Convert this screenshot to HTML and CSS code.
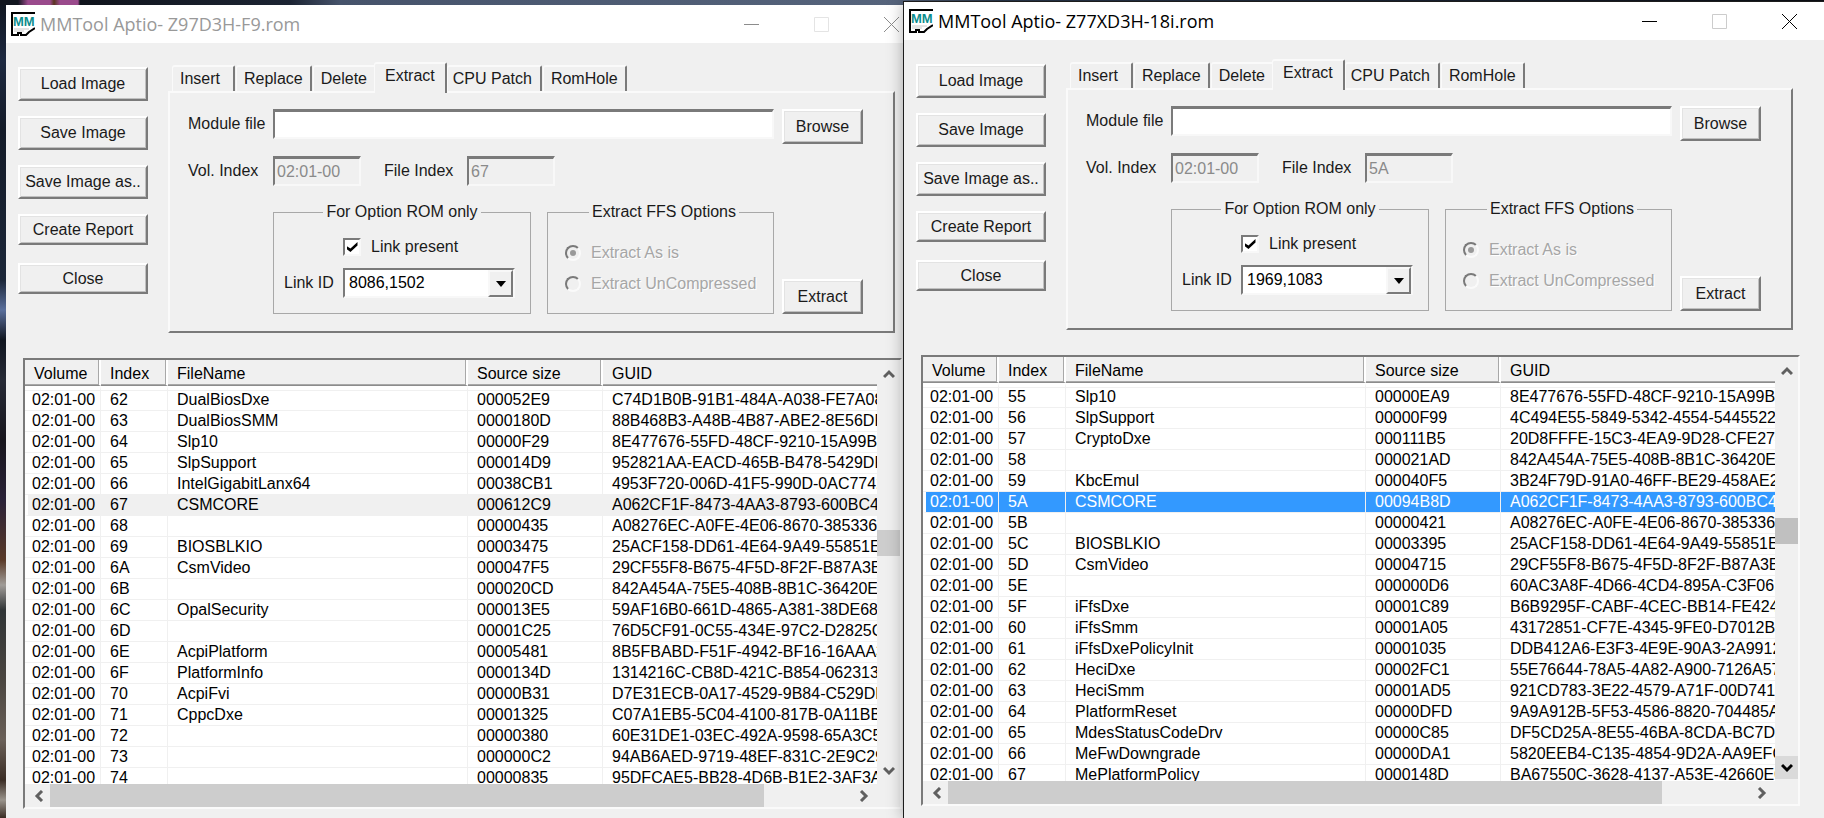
FILE: index.html
```html
<!DOCTYPE html>
<html lang="en">
<head>
<meta charset="utf-8">
<title>MMTool Aptio</title>
<link rel="stylesheet" href="styles.css">
</head>
<body>
<div class="desktop">

<section class="window window-back" aria-label="MMTool Aptio- Z97D3H-F9.rom">
  <header class="titlebar">
    <svg class="app-icon" viewBox="0 0 24 24" aria-hidden="true"><path d="M1 1H24V15L18 19L15 23L10 21L7 23H1Z" fill="#fff"/><path d="M24 1H1V23H7V21H10V23H15L18 20L24 16" fill="none" stroke="#000" stroke-width="2"/><path d="M3 17H18M3 19H13" stroke="#c8c8c8"/><text class="icon-text" x="2" y="14">MM</text></svg>
    <h1 class="title">MMTool Aptio- Z97D3H-F9.rom</h1>
    <div class="controls">
      <button class="ctl" aria-label="Minimize"><svg viewBox="0 0 15 15"><path d="M0 7.5H15"/></svg></button>
      <button class="ctl ctl-max" aria-label="Maximize" disabled><svg viewBox="0 0 15 15"><path d="M.5 .5H14.5V14.5H.5Z"/></svg></button>
      <button class="ctl" aria-label="Close window"><svg viewBox="0 0 15 15"><path d="M0 0L15 15M15 0L0 15"/></svg></button>
    </div>
  </header>
  <div class="top">
    <div class="actions">
      <button class="btn">Load Image</button>
      <button class="btn">Save Image</button>
      <button class="btn">Save Image as..</button>
      <button class="btn btn-low">Create Report</button>
      <button class="btn btn-low">Close</button>
    </div>
    <div class="tabs">
      <div class="tab-row" role="tablist">
        <button class="tab tab-first" role="tab">Insert</button>
        <button class="tab" role="tab">Replace</button>
        <button class="tab" role="tab">Delete</button>
        <button class="tab tab-active" role="tab" aria-selected="true">Extract</button>
        <button class="tab tab-after" role="tab">CPU Patch</button>
        <button class="tab" role="tab">RomHole</button>
      </div>
      <div class="panel" role="tabpanel">
        <div class="row row-file">
          <label class="caption" for="file-a">Module file</label>
          <input class="field grow" id="file-a" type="text">
          <button class="btn btn-side">Browse</button>
        </div>
        <div class="row row-index">
          <label class="caption" for="vol-a">Vol. Index</label>
          <input class="field field-short" id="vol-a" type="text" value="02:01-00" disabled>
          <label class="caption-mid" for="idx-a">File Index</label>
          <input class="field field-short" id="idx-a" type="text" value="67" disabled>
        </div>
        <div class="row row-groups">
          <fieldset class="group group-rom">
            <legend>For Option ROM only</legend>
            <label class="check-line"><input class="check" type="checkbox" checked>Link present</label>
            <div class="link-line">
              <label for="link-a">Link ID</label>
              <span class="combo"><select id="link-a"><option>8086,1502</option></select><span class="combo-arrow"></span></span>
            </div>
          </fieldset>
          <fieldset class="group group-ffs" disabled>
            <legend>Extract FFS Options</legend>
            <label class="radio-line"><input class="radio" type="radio" name="ffs-a" checked>Extract As is</label>
            <label class="radio-line"><input class="radio" type="radio" name="ffs-a">Extract UnCompressed</label>
          </fieldset>
          <button class="btn btn-side">Extract</button>
        </div>
      </div>
    </div>
  </div>
  <div class="list">
    <div class="viewport">
      <table class="files">
        <colgroup><col class="c-vol"><col class="c-idx"><col class="c-name"><col class="c-size"><col></colgroup>
        <thead><tr><th>Volume</th><th>Index</th><th>FileName</th><th>Source size</th><th>GUID</th></tr></thead>
        <tbody>
          <tr><td>02:01-00</td><td>62</td><td>DualBiosDxe</td><td>000052E9</td><td>C74D1B0B-91B1-484A-A038-FE7A08</td></tr>
          <tr><td>02:01-00</td><td>63</td><td>DualBiosSMM</td><td>0000180D</td><td>88B468B3-A48B-4B87-ABE2-8E56DF</td></tr>
          <tr><td>02:01-00</td><td>64</td><td>Slp10</td><td>00000F29</td><td>8E477676-55FD-48CF-9210-15A99B2</td></tr>
          <tr><td>02:01-00</td><td>65</td><td>SlpSupport</td><td>000014D9</td><td>952821AA-EACD-465B-B478-5429DF</td></tr>
          <tr><td>02:01-00</td><td>66</td><td>IntelGigabitLanx64</td><td>00038CB1</td><td>4953F720-006D-41F5-990D-0AC7742</td></tr>
          <tr class="row-idle"><td>02:01-00</td><td>67</td><td>CSMCORE</td><td>000612C9</td><td>A062CF1F-8473-4AA3-8793-600BC4F</td></tr>
          <tr><td>02:01-00</td><td>68</td><td></td><td>00000435</td><td>A08276EC-A0FE-4E06-8670-385336C</td></tr>
          <tr><td>02:01-00</td><td>69</td><td>BIOSBLKIO</td><td>00003475</td><td>25ACF158-DD61-4E64-9A49-55851E</td></tr>
          <tr><td>02:01-00</td><td>6A</td><td>CsmVideo</td><td>000047F5</td><td>29CF55F8-B675-4F5D-8F2F-B87A3E</td></tr>
          <tr><td>02:01-00</td><td>6B</td><td></td><td>000020CD</td><td>842A454A-75E5-408B-8B1C-36420E</td></tr>
          <tr><td>02:01-00</td><td>6C</td><td>OpalSecurity</td><td>000013E5</td><td>59AF16B0-661D-4865-A381-38DE68</td></tr>
          <tr><td>02:01-00</td><td>6D</td><td></td><td>00001C25</td><td>76D5CF91-0C55-434E-97C2-D2825C</td></tr>
          <tr><td>02:01-00</td><td>6E</td><td>AcpiPlatform</td><td>00005481</td><td>8B5FBABD-F51F-4942-BF16-16AAA3</td></tr>
          <tr><td>02:01-00</td><td>6F</td><td>PlatformInfo</td><td>0000134D</td><td>1314216C-CB8D-421C-B854-062313</td></tr>
          <tr><td>02:01-00</td><td>70</td><td>AcpiFvi</td><td>00000B31</td><td>D7E31ECB-0A17-4529-9B84-C529DE</td></tr>
          <tr><td>02:01-00</td><td>71</td><td>CppcDxe</td><td>00001325</td><td>C07A1EB5-5C04-4100-817B-0A11BB</td></tr>
          <tr><td>02:01-00</td><td>72</td><td></td><td>00000380</td><td>60E31DE1-03EC-492A-9598-65A3C5</td></tr>
          <tr><td>02:01-00</td><td>73</td><td></td><td>000000C2</td><td>94AB6AED-9719-48EF-831C-2E9C29</td></tr>
          <tr><td>02:01-00</td><td>74</td><td></td><td>00000835</td><td>95DFCAE5-BB28-4D6B-B1E2-3AF3A6</td></tr>
        </tbody>
      </table>
    </div>
    <div class="vbar">
      <button class="arrow" aria-label="Scroll up"><svg viewBox="0 0 12 12"><path d="M1 9L6 4L11 9"/></svg></button>
      <div class="vtrack"><div class="vlead"></div><div class="vthumb"></div></div>
      <button class="arrow" aria-label="Scroll down"><svg viewBox="0 0 12 12"><path d="M1 3L6 8L11 3"/></svg></button>
    </div>
    <div class="hbar">
      <button class="arrow" aria-label="Scroll left"><svg viewBox="0 0 12 12"><path d="M9 1L4 6L9 11"/></svg></button>
      <div class="htrack"><div class="hthumb"></div></div>
      <button class="arrow" aria-label="Scroll right"><svg viewBox="0 0 12 12"><path d="M3 1L8 6L3 11"/></svg></button>
    </div>
  </div>
</section>

<section class="window window-front" aria-label="MMTool Aptio- Z77XD3H-18i.rom">
  <header class="titlebar">
    <svg class="app-icon" viewBox="0 0 24 24" aria-hidden="true"><path d="M1 1H24V15L18 19L15 23L10 21L7 23H1Z" fill="#fff"/><path d="M24 1H1V23H7V21H10V23H15L18 20L24 16" fill="none" stroke="#000" stroke-width="2"/><path d="M3 17H18M3 19H13" stroke="#c8c8c8"/><text class="icon-text" x="2" y="14">MM</text></svg>
    <h1 class="title">MMTool Aptio- Z77XD3H-18i.rom</h1>
    <div class="controls">
      <button class="ctl" aria-label="Minimize"><svg viewBox="0 0 15 15"><path d="M0 7.5H15"/></svg></button>
      <button class="ctl ctl-max" aria-label="Maximize" disabled><svg viewBox="0 0 15 15"><path d="M.5 .5H14.5V14.5H.5Z"/></svg></button>
      <button class="ctl" aria-label="Close window"><svg viewBox="0 0 15 15"><path d="M0 0L15 15M15 0L0 15"/></svg></button>
    </div>
  </header>
  <div class="top">
    <div class="actions">
      <button class="btn">Load Image</button>
      <button class="btn">Save Image</button>
      <button class="btn">Save Image as..</button>
      <button class="btn btn-low">Create Report</button>
      <button class="btn btn-low">Close</button>
    </div>
    <div class="tabs">
      <div class="tab-row" role="tablist">
        <button class="tab tab-first" role="tab">Insert</button>
        <button class="tab" role="tab">Replace</button>
        <button class="tab" role="tab">Delete</button>
        <button class="tab tab-active" role="tab" aria-selected="true">Extract</button>
        <button class="tab tab-after" role="tab">CPU Patch</button>
        <button class="tab" role="tab">RomHole</button>
      </div>
      <div class="panel" role="tabpanel">
        <div class="row row-file">
          <label class="caption" for="file-b">Module file</label>
          <input class="field grow" id="file-b" type="text">
          <button class="btn btn-side">Browse</button>
        </div>
        <div class="row row-index">
          <label class="caption" for="vol-b">Vol. Index</label>
          <input class="field field-short" id="vol-b" type="text" value="02:01-00" disabled>
          <label class="caption-mid" for="idx-b">File Index</label>
          <input class="field field-short" id="idx-b" type="text" value="5A" disabled>
        </div>
        <div class="row row-groups">
          <fieldset class="group group-rom">
            <legend>For Option ROM only</legend>
            <label class="check-line"><input class="check" type="checkbox" checked>Link present</label>
            <div class="link-line">
              <label for="link-b">Link ID</label>
              <span class="combo"><select id="link-b"><option>1969,1083</option></select><span class="combo-arrow"></span></span>
            </div>
          </fieldset>
          <fieldset class="group group-ffs" disabled>
            <legend>Extract FFS Options</legend>
            <label class="radio-line"><input class="radio" type="radio" name="ffs-b" checked>Extract As is</label>
            <label class="radio-line"><input class="radio" type="radio" name="ffs-b">Extract UnCompressed</label>
          </fieldset>
          <button class="btn btn-side">Extract</button>
        </div>
      </div>
    </div>
  </div>
  <div class="list">
    <div class="viewport">
      <table class="files">
        <colgroup><col class="c-vol"><col class="c-idx"><col class="c-name"><col class="c-size"><col></colgroup>
        <thead><tr><th>Volume</th><th>Index</th><th>FileName</th><th>Source size</th><th>GUID</th></tr></thead>
        <tbody>
          <tr><td>02:01-00</td><td>55</td><td>Slp10</td><td>00000EA9</td><td>8E477676-55FD-48CF-9210-15A99B2</td></tr>
          <tr><td>02:01-00</td><td>56</td><td>SlpSupport</td><td>00000F99</td><td>4C494E55-5849-5342-4554-5445522</td></tr>
          <tr><td>02:01-00</td><td>57</td><td>CryptoDxe</td><td>000111B5</td><td>20D8FFFE-15C3-4EA9-9D28-CFE274</td></tr>
          <tr><td>02:01-00</td><td>58</td><td></td><td>000021AD</td><td>842A454A-75E5-408B-8B1C-36420E</td></tr>
          <tr><td>02:01-00</td><td>59</td><td>KbcEmul</td><td>000040F5</td><td>3B24F79D-91A0-46FF-BE29-458AE2</td></tr>
          <tr class="row-selected"><td>02:01-00</td><td>5A</td><td>CSMCORE</td><td>00094B8D</td><td>A062CF1F-8473-4AA3-8793-600BC4F</td></tr>
          <tr><td>02:01-00</td><td>5B</td><td></td><td>00000421</td><td>A08276EC-A0FE-4E06-8670-385336C</td></tr>
          <tr><td>02:01-00</td><td>5C</td><td>BIOSBLKIO</td><td>00003395</td><td>25ACF158-DD61-4E64-9A49-55851E</td></tr>
          <tr><td>02:01-00</td><td>5D</td><td>CsmVideo</td><td>00004715</td><td>29CF55F8-B675-4F5D-8F2F-B87A3E</td></tr>
          <tr><td>02:01-00</td><td>5E</td><td></td><td>000000D6</td><td>60AC3A8F-4D66-4CD4-895A-C3F06E</td></tr>
          <tr><td>02:01-00</td><td>5F</td><td>iFfsDxe</td><td>00001C89</td><td>B6B9295F-CABF-4CEC-BB14-FE4246</td></tr>
          <tr><td>02:01-00</td><td>60</td><td>iFfsSmm</td><td>00001A05</td><td>43172851-CF7E-4345-9FE0-D7012BF</td></tr>
          <tr><td>02:01-00</td><td>61</td><td>iFfsDxePolicyInit</td><td>00001035</td><td>DDB412A6-E3F3-4E9E-90A3-2A9912</td></tr>
          <tr><td>02:01-00</td><td>62</td><td>HeciDxe</td><td>00002FC1</td><td>55E76644-78A5-4A82-A900-7126A57</td></tr>
          <tr><td>02:01-00</td><td>63</td><td>HeciSmm</td><td>00001AD5</td><td>921CD783-3E22-4579-A71F-00D741</td></tr>
          <tr><td>02:01-00</td><td>64</td><td>PlatformReset</td><td>00000DFD</td><td>9A9A912B-5F53-4586-8820-704485A</td></tr>
          <tr><td>02:01-00</td><td>65</td><td>MdesStatusCodeDrv</td><td>00000C85</td><td>DF5CD25A-8E55-46BA-8CDA-BC7DE</td></tr>
          <tr><td>02:01-00</td><td>66</td><td>MeFwDowngrade</td><td>00000DA1</td><td>5820EEB4-C135-4854-9D2A-AA9EFC</td></tr>
          <tr><td>02:01-00</td><td>67</td><td>MePlatformPolicy</td><td>0000148D</td><td>BA67550C-3628-4137-A53E-42660E0</td></tr>
        </tbody>
      </table>
    </div>
    <div class="vbar">
      <button class="arrow" aria-label="Scroll up"><svg viewBox="0 0 12 12"><path d="M1 9L6 4L11 9"/></svg></button>
      <div class="vtrack"><div class="vlead"></div><div class="vthumb"></div></div>
      <button class="arrow arrow-hot" aria-label="Scroll down"><svg viewBox="0 0 12 12"><path d="M1 3L6 8L11 3"/></svg></button>
    </div>
    <div class="hbar">
      <button class="arrow" aria-label="Scroll left"><svg viewBox="0 0 12 12"><path d="M9 1L4 6L9 11"/></svg></button>
      <div class="htrack"><div class="hthumb"></div></div>
      <button class="arrow" aria-label="Scroll right"><svg viewBox="0 0 12 12"><path d="M3 1L8 6L3 11"/></svg></button>
    </div>
  </div>
</section>

</div>
</body>
</html>
```
FILE: styles.css
```css
* { box-sizing: border-box; }

body {
  margin: 0;
  font: 16px/20px "Liberation Sans", Arial, sans-serif;
  color: #1a1a1a;
}

button, input, select { font: inherit; color: inherit; margin: 0; }

.desktop {
  position: relative;
  height: 100vh;
  overflow: hidden;
  background:
    linear-gradient(90deg, #12161f 0 18px, #9a4a8c 28px 50px, #5a3420 54px, #9a4a8c 60px 78px, #10141c 80px, #1c2433 290px, #46536b 340px, #56647c 900px, #2b3a50 1000px, #1b2536 1400px, #0c0f16 100%) top / 100% 5px no-repeat,
    linear-gradient(180deg, #10151f, #1d2940 60px, #141b28 130px, #1b2638 280px, #5a6f9c 310px, #10151f 340px, #262a36 380px, #17151c 440px, #2a2238 500px, #5a3a28 560px, #a09c98 585px, #303436 610px, #4a4540 680px, #6a6058 740px, #3a2c24 780px, #9a948c 800px, #3a2c24);
}

.window {
  position: absolute;
  width: calc(50% + 8px);
  height: calc(100vh - 2px);
  display: flex;
  flex-direction: column;
  background: #f0f0f0;
}
.window-back { left: 6px; top: 5px; }
.window-front {
  left: calc(50% - 8px);
  top: 2px;
  box-shadow: 0 0 0 1px #1c1c1c, 0 0 16px rgba(0, 0, 0, .35);
}

/* title bar */
.titlebar {
  display: flex;
  align-items: center;
  height: 38px;
  flex: none;
  padding: 0 27px 0 5px;
  background: #fff;
}
.app-icon { width: 24px; height: 24px; flex: none; }
.icon-text { font: bold 13px "Liberation Sans", Arial, sans-serif; fill: #0b8c8c; }
.title {
  flex: 1;
  margin: 0 0 0 5px;
  font: 18px/24px "Open Sans", "Noto Sans", sans-serif;
  color: #000;
}
.window-back .title { color: #999; }
.controls { display: flex; gap: 55px; }
.ctl { width: 15px; height: 15px; padding: 0; border: 0; background: none; }
.ctl svg { display: block; width: 15px; height: 15px; fill: none; stroke: #000; }
.window-back .ctl svg { stroke: #8c8c8c; }
.ctl-max svg { stroke: #ccc; }
.window-back .ctl-max svg { stroke: #e4e4e4; }

/* upper area */
.top {
  display: flex;
  gap: 20px;
  padding: 19px 31px 25px 12px;
}
.actions {
  display: grid;
  grid-auto-rows: 34px;
  gap: 15px;
  align-content: start;
  width: 130px;
  padding-top: 5px;
}
.btn {
  height: 34px;
  padding: 0;
  background: #f0f0f0;
  border: 2px solid;
  border-color: #fff #7a7a7a #7a7a7a #fff;
  box-shadow: inset 1px 1px #e3e3e3, inset -1px -1px #c0c0c0;
}
.btn-low { height: 31px; }

.tabs { flex: 1; }
.tab-row {
  display: flex;
  align-items: flex-end;
  gap: 1px;
  height: 29px;
  padding-left: 4px;
}
.tab {
  height: 26px;
  padding: 0 7px;
  background: #f0f0f0;
  border: solid;
  border-width: 2px 2px 0 1px;
  border-color: #fafafa #7a7a7a #fafafa #fafafa;
  border-radius: 3px 2px 0 0;
  white-space: nowrap;
}
.tab-first { padding-right: 13px; }
.tab-after { padding: 0 8px 0 5px; }
.tab-active {
  position: relative;
  height: 31px;
  margin: 0 -1px -2px -3px;
  padding: 0 10px 6px;
}

.panel {
  padding: 16px 30px 17px 18px;
  border: 2px solid;
  border-color: #fafafa #7a7a7a #7a7a7a #fafafa;
}
.row { display: flex; }
.row-file { align-items: flex-start; margin-bottom: 12px; }
.row-index { align-items: flex-start; margin-bottom: 16px; }
.row-groups { align-items: flex-end; padding-left: 85px; }
.caption { width: 85px; padding: 5px 0; flex: none; }
.caption-mid { width: 83px; padding: 5px 0; margin-left: 23px; }
.field {
  min-width: 0;
  height: 30px;
  padding: 0 2px;
  background: #fff;
  border: 2px solid;
  border-color: #7a7a7a #f8f8f8 #f8f8f8 #7a7a7a;
  border-top-width: 3px;
  border-radius: 0;
}
.field:disabled { background: #f0f0f0; color: #8a8a8a; }
.field-short { width: 88px; }
.grow { flex: 1; }
.btn-side { width: 81px; height: 35px; margin-left: 8px; flex: none; }

.group {
  height: 112px;
  min-width: 0;
  margin: 0;
  padding: 11px 10px 0;
  border: 1px solid #a8a8a8;
}
.group legend { margin: 0 auto; padding: 0 3px; color: #1a1a1a; }
.group-rom { flex: 258 1 258px; }
.group-ffs {
  flex: 227 1 227px;
  margin-left: 16px;
  padding: 15px 10px 0 17px;
  color: #a6a6a6;
}
.check-line { display: flex; align-items: center; gap: 10px; padding: 3px 0 0 59px; height: 25px; }
.check {
  appearance: none;
  display: flex;
  align-items: center;
  justify-content: center;
  width: 18px;
  height: 18px;
  background: #fff;
  border: 2px solid;
  border-color: #7a7a7a #f8f8f8 #f8f8f8 #7a7a7a;
}
.check:checked::before {
  content: "";
  width: 11px;
  height: 10px;
  background: #000;
  clip-path: polygon(0 40%, 0 70%, 36% 100%, 100% 34%, 100% 0, 36% 64%);
}
.link-line { display: flex; align-items: center; justify-content: space-between; margin-top: 10px; padding-right: 5px; }
.combo { position: relative; width: 172px; height: 30px; }
.combo select {
  appearance: none;
  width: 100%;
  height: 100%;
  padding: 0 28px 0 4px;
  color: #000;
  background: #fff;
  border: 2px solid;
  border-color: #7a7a7a #f8f8f8 #f8f8f8 #7a7a7a;
  border-radius: 0;
}
.combo-arrow {
  position: absolute;
  top: 2px;
  right: 2px;
  bottom: 1px;
  width: 25px;
  display: flex;
  align-items: center;
  justify-content: center;
  background: #f0f0f0;
  border: 2px solid;
  border-color: #f8f8f8 #7a7a7a #7a7a7a #f8f8f8;
  pointer-events: none;
}
.combo-arrow::before {
  content: "";
  border: solid transparent;
  border-width: 6px 5px 0;
  border-top-color: #000;
}
.radio-line { display: flex; align-items: center; gap: 10px; height: 31px; text-shadow: 1px 1px #fff; }
.radio {
  appearance: none;
  display: flex;
  align-items: center;
  justify-content: center;
  width: 16px;
  height: 16px;
  border: 2px solid;
  border-color: #7a7a7a #fafafa #fafafa #7a7a7a;
  border-radius: 50%;
}
.radio:checked::before { content: ""; width: 6px; height: 6px; border-radius: 50%; background: #999; }

/* file list */
.list {
  flex: 1;
  min-height: 0;
  display: grid;
  grid-template: minmax(0, 1fr) 23px / minmax(0, 1fr) 23px;
  margin: 0 24px 12px 17px;
  border: 2px solid;
  border-color: #7a7a7a #fafafa #fafafa #7a7a7a;
}
.viewport { overflow: hidden; background: #fff; color: #000; }
.files { width: 100%; table-layout: fixed; border-collapse: separate; border-spacing: 0; }
.c-vol { width: 76px; }
.c-idx { width: 67px; }
.c-name { width: 300px; }
.c-size { width: 135px; }
.files th {
  height: 26px;
  padding: 2px 0 0 9px;
  font-weight: normal;
  text-align: left;
  background: #f0f0f0;
  border-right: 2px solid #fff;
  border-bottom: 1px solid #8c8c8c;
  box-shadow: inset -1px -1px #a8a8a8;
}
.files td {
  height: 21px;
  padding: 0 0 0 9px;
  overflow: hidden;
  white-space: nowrap;
  border-right: 1px solid #f0f0f0;
  border-bottom: 1px solid #f0f0f0;
}
.files td:first-child { padding-left: 7px; }
.files th:last-child, .files td:last-child { border-right: 0; }
.files th:last-child { box-shadow: inset 0 -1px #a8a8a8; }
.files tbody tr:first-child td { height: 25px; border-top: 4px solid #fff; box-shadow: inset 0 1px #f0f0f0; }
.row-idle td { background: #f0f0f0; }
.row-selected td { background: #3399ff; color: #fff; }
.row-idle td:first-child, .row-selected td:first-child { padding-left: 4px; border-left: 3px solid #fff; }

.arrow {
  display: flex;
  align-items: center;
  justify-content: center;
  width: 23px;
  height: 23px;
  padding: 0;
  border: 0;
  background: none;
}
.arrow svg { width: 12px; height: 12px; fill: none; stroke: #606060; stroke-width: 3; }
.arrow-hot { background: #dadada; }
.arrow-hot svg { stroke: #000; }
.vbar { display: flex; flex-direction: column; padding: 2px 0; }
.vtrack { flex: 1; display: flex; flex-direction: column; }
.vlead { flex: 145; }
.vthumb { height: 26px; background: #cdcdcd; }
.vtrack::after { content: ""; flex: 202; }
.window-front .vlead { flex: 136; }
.window-front .vthumb { background: #c0c0c0; }
.window-front .vtrack::after { flex: 211; }
.hbar { display: flex; padding: 0 2px; }
.htrack { flex: 1; }
.hthumb { width: 89%; height: 100%; background: #cdcdcd; }
```
